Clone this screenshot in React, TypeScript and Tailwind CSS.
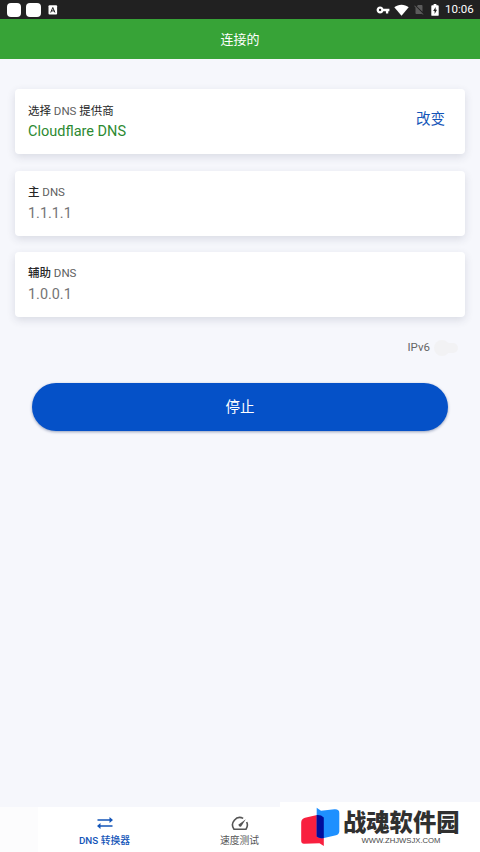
import React from "react";

function StatusBar() {
  return (
    <div className="flex h-[19px] items-center bg-[#212121] pl-[7px] pr-[6px] text-white">
      <div className="h-[14px] w-[14px] rounded-[4px] bg-white" />
      <div className="ml-[5px] h-[14px] w-[15px] rounded-[4px] bg-white" />
      <svg className="ml-[7px]" width="10" height="10" viewBox="0 0 10 10">
        <rect x="0.5" y="0.3" width="8.6" height="9.2" rx="1" fill="#fff" />
        <path d="M2.7 7.5 4.8 2.5 6.9 7.5M3.4 5.9H6.2" fill="none" stroke="#212121" strokeWidth="1" />
      </svg>
      <div className="flex-1" />
      {/* VPN key */}
      <svg width="14" height="14" viewBox="0 0 24 24" fill="currentColor">
        <path d="M12.65 10A5.99 5.99 0 0 0 7 6c-3.31 0-6 2.69-6 6s2.69 6 6 6a5.99 5.99 0 0 0 5.65-4H17v4h4v-4h2v-4H12.65zM7 14c-1.1 0-2-.9-2-2s.9-2 2-2 2 .9 2 2-.9 2-2 2z" />
      </svg>
      {/* Wi-Fi */}
      <svg className="ml-[4px]" width="15" height="12" viewBox="0 0 15 12" fill="currentColor">
        <path d="M.3 3.3C4.3-.1 10.7-.1 14.7 3.3L7.5 11.7Z" />
      </svg>
      {/* No SIM */}
      <svg className="ml-[4px] text-[#5b5b5b]" width="12" height="13" viewBox="0 0 24 24" fill="currentColor">
        <path d="M18.99 5c0-1.1-.89-2-1.99-2h-7L7.66 5.34 19 16.68 18.99 5zM3.65 3.88 2.38 5.15 5 7.77V19c0 1.1.9 2 2 2h10.01c.35 0 .67-.1.96-.26l1.88 1.88 1.27-1.27L3.65 3.88z" />
      </svg>
      {/* Charging battery */}
      <svg className="ml-[6px]" width="8" height="12" viewBox="0 0 8 13">
        <path d="M2.5 0h3v1.3H7a1 1 0 0 1 1 1V11.8a1 1 0 0 1-1 1H1a1 1 0 0 1-1-1V2.3a1 1 0 0 1 1-1H2.5Z" fill="#fff" />
        <path d="M4.7 3.3 2 7.5h1.6v3.3L6.2 6.3H4.7Z" fill="#212121" />
      </svg>
      <span className="ml-[6px] w-[29px] whitespace-nowrap text-[11.5px] leading-[19px]">10:06</span>
    </div>
  );
}

function Card({ children }: { children: React.ReactNode }) {
  return (
    <div className="flex h-[65px] items-center justify-between rounded-[4px] bg-white pl-[13px] pr-[20px] shadow-[0_3px_8px_rgba(40,50,80,0.14)]">
      {children}
    </div>
  );
}

function Server({ label, address }: { label: React.ReactNode; address: string }) {
  return (
    <Card>
      <div className="pt-px">
        <div className="text-[11.5px] leading-[20px] text-[#606060]">{label}</div>
        <div className="text-[14.4px] leading-[24px] text-[#747474]">{address}</div>
      </div>
    </Card>
  );
}

function Watermark() {
  return (
    <div className="absolute right-0 bottom-0 flex h-[50px] w-[200px] bg-white">
      <svg className="ml-[20px] mt-[4px] shrink-0" width="41" height="42" viewBox="300 806 41 42">
        <path d="M301.2 822.5Q301.3 818.7 305 817.7L316 815.2Q321 814.7 323.8 817.5V846L319.5 843.3L304 843.8Q301.2 843.5 301.2 841Z" fill="#f8203f" />
        <path d="M316.7 807.7 321 810.8 334.5 809.3Q339.3 809 339.3 813V831.5Q339 834.5 336 835.2L324 838Q319.5 839 316.7 836.5Z" fill="#1e90ff" />
        <path d="M316.7 815.1Q321 814.7 323.8 817.5V838Q319.5 839 316.7 836.5Z" fill="#000d9b" />
      </svg>
      <div className="ml-[2px] mt-[8px]">
        <div className="w-[117px] whitespace-nowrap text-[23.3px] leading-[26px] font-black text-[#303030]">战魂软件园</div>
        <svg className="ml-[18px] block" width="84" height="9">
          <text x="0.5" y="6.6" fontSize="7.5" textLength="79" lengthAdjust="spacingAndGlyphs" fill="#484848" className="font-['Liberation_Sans',sans-serif]">WWW.ZHJWSJX.COM</text>
        </svg>
      </div>
    </div>
  );
}

export default function App() {
  return (
    <div className="relative flex h-[852px] w-[480px] flex-col overflow-hidden bg-[#f6f7fc] font-[Roboto,'Noto_Sans_CJK_SC',sans-serif]">
      <StatusBar />
      <header className="flex h-[40px] items-center justify-center bg-[#37a337] pt-[2px] text-[13px] text-white">连接的</header>

      <main className="flex flex-1 flex-col px-[15px] pt-[30px]">
        <div className="flex flex-col gap-[16.5px]">
          <Card>
            <div>
              <div className="text-[11.5px] leading-[20px] text-[#606060]">
                <span className="text-[#262626]">选择</span> DNS <span className="text-[#262626]">提供商</span>
              </div>
              <div className="text-[14.5px] leading-[22px] text-[#2c8a32]">Cloudflare DNS</div>
            </div>
            <button className="pb-[4px] text-[14.5px] text-[#1455b8]">改变</button>
          </Card>
          <Server label={<><span className="font-medium text-[#262626]">主</span> DNS</>} address="1.1.1.1" />
          <Server label={<><span className="font-medium text-[#262626]">辅助</span> DNS</>} address="1.0.0.1" />
        </div>

        <div className="mt-[21px] flex h-[20px] items-center justify-end pr-[7px]">
          <span className="text-[11.5px] text-[#666]">IPv6</span>
          <div className="ml-[4px] flex h-[16px] w-[24px] items-center">
            <div className="h-[16px] w-[16px] rounded-full bg-[#f2f2f4]" />
            <div className="-ml-[6px] h-[10px] w-[14px] rounded-r-full bg-[#f2f2f4]" />
          </div>
        </div>

        <button className="mx-[17px] mt-[25px] h-[48px] rounded-full bg-[#0551c8] pt-[2px] text-[14.5px] text-white shadow-[0_1px_3px_rgba(0,30,90,0.4)]">
          停止
        </button>
      </main>

      <nav className="flex h-[45px] bg-white">
        <div className="w-[38px] bg-[#fcfcfd]" />
        <div className="flex w-[133px] flex-col items-center pt-[9px] text-[#1455b8]">
          <svg width="16" height="14" viewBox="0 0 16 14" fill="none" stroke="currentColor" strokeWidth="1.4">
            <path d="M.5 4H14M15.5 10H2" />
            <path d="M12.5 1 16 4 12.5 7ZM3.5 7 0 10 3.5 13Z" fill="currentColor" stroke="none" />
          </svg>
          <span className="mt-[3px] text-[9.8px] leading-[16px] font-medium">DNS 转换器</span>
        </div>
        <div className="flex w-[137px] flex-col items-center pt-[9px] text-[#555]">
          <svg width="18" height="16" viewBox="0 0 18 16" fill="none" stroke="currentColor" strokeWidth="1.6">
            <path d="M12.2 2.4A7.3 7.3 0 0 0 3 13.2H15A7.3 7.3 0 0 0 15.7 6" />
            <path d="M14.8 3.3 10.3 10.2A1.5 1.5 0 0 1 8 8.2Z" fill="currentColor" stroke="none" />
          </svg>
          <span className="mt-px text-[9.8px] leading-[16px]">速度测试</span>
        </div>
      </nav>

      <Watermark />
    </div>
  );
}
